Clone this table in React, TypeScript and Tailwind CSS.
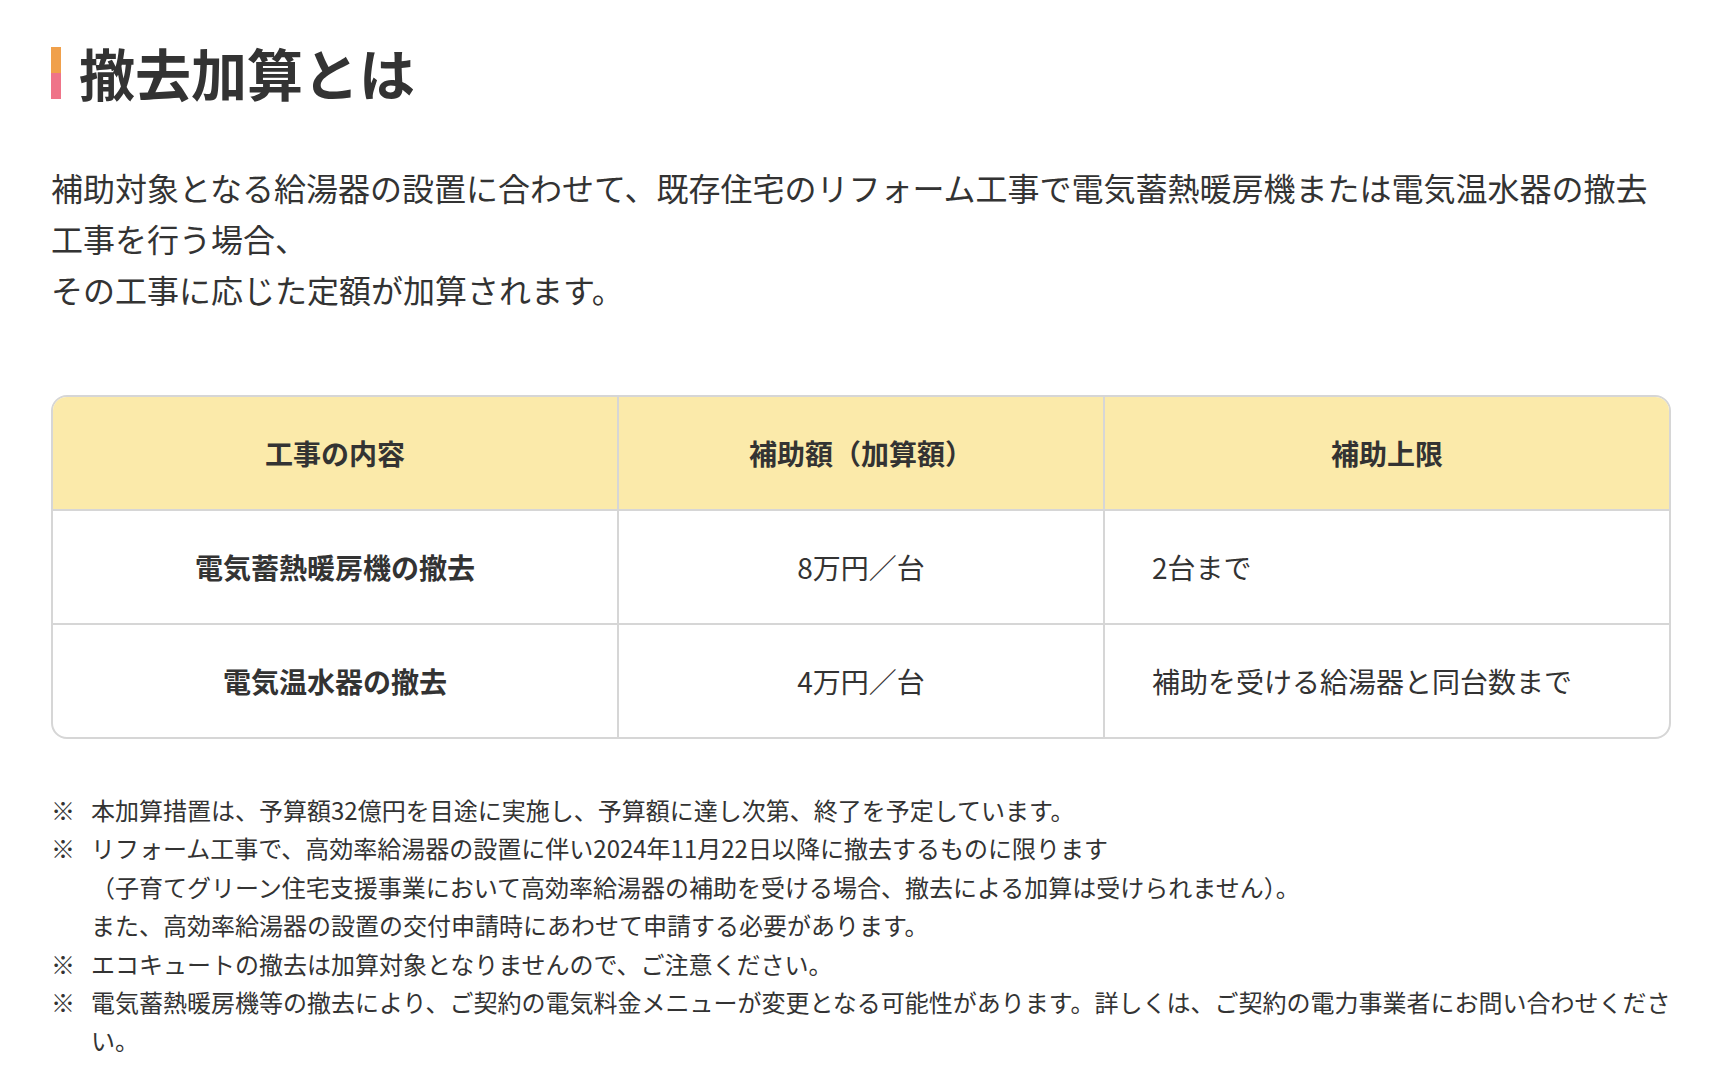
const rows = [
  { item: "電気蓄熱暖房機の撤去", amount: "8万円／台", limit: "2台まで" },
  { item: "電気温水器の撤去", amount: "4万円／台", limit: "補助を受ける給湯器と同台数まで" },
];

function Note({ children }: { children: React.ReactNode }) {
  return (
    <li className="flex">
      <span className="w-10 shrink-0">※</span>
      <span className="flex-1">{children}</span>
    </li>
  );
}

export default function App() {
  return (
    <div
      className="min-h-screen bg-white text-[#333333] pl-[51px] pt-[47px] pb-6"
      style={{ fontFamily: '"Noto Sans CJK JP", "Noto Sans", sans-serif' }}
    >
      <div className="w-[1620px]">
        {/* Title */}
        <h2 className="flex items-center h-[52px]">
          <span className="flex flex-col w-[10px] h-[52px] shrink-0">
            <span className="flex-1 bg-[#f0a04b]" />
            <span className="flex-1 bg-[#ef7489]" />
          </span>
          <span className="ml-[18px] -mt-[3px] text-[56px] leading-none font-bold">
            撤去加算とは
          </span>
        </h2>

        {/* Lead */}
        <p className="mt-[63px] text-[32px] leading-[51px]">
          補助対象となる給湯器の設置に合わせて、既存住宅のリフォーム工事で電気蓄熱暖房機または電気温水器の撤去工事を行う場合、
          <br />
          その工事に応じた定額が加算されます。
        </p>

        {/* Table */}
        <div className="mt-[80px] border-2 border-[#d6d6d6] rounded-2xl overflow-hidden text-[28px] leading-[1.5]">
          <div className="grid grid-cols-[564px_486px_1fr] h-[112px] bg-[#fbeaaa] font-bold">
            <div className="flex items-center justify-center">工事の内容</div>
            <div className="flex items-center justify-center border-l-2 border-[#d6d6d6]">
              補助額（加算額）
            </div>
            <div className="flex items-center justify-center border-l-2 border-[#d6d6d6]">
              補助上限
            </div>
          </div>
          {rows.map((r) => (
            <div
              key={r.item}
              className="grid grid-cols-[564px_486px_1fr] h-[114px] border-t-2 border-[#d6d6d6]"
            >
              <div className="flex items-center justify-center font-bold">{r.item}</div>
              <div className="flex items-center justify-center border-l-2 border-[#d6d6d6]">
                {r.amount}
              </div>
              <div className="flex items-center pl-[47px] border-l-2 border-[#d6d6d6]">
                {r.limit}
              </div>
            </div>
          ))}
        </div>

        {/* Notes */}
        <ul className="mt-[52px] w-[1632px] text-[24px] leading-[1.6]">
          <Note>本加算措置は、予算額32億円を目途に実施し、予算額に達し次第、終了を予定しています。</Note>
          <Note>
            リフォーム工事で、高効率給湯器の設置に伴い2024年11月22日以降に撤去するものに限ります
            <br />
            （子育てグリーン住宅支援事業において高効率給湯器の補助を受ける場合、撤去による加算は受けられません）。
            <br />
            また、高効率給湯器の設置の交付申請時にあわせて申請する必要があります。
          </Note>
          <Note>エコキュートの撤去は加算対象となりませんので、ご注意ください。</Note>
          <Note>
            電気蓄熱暖房機等の撤去により、ご契約の電気料金メニューが変更となる可能性があります。詳しくは、ご契約の電力事業者にお問い合わせください。
          </Note>
        </ul>
      </div>
    </div>
  );
}
